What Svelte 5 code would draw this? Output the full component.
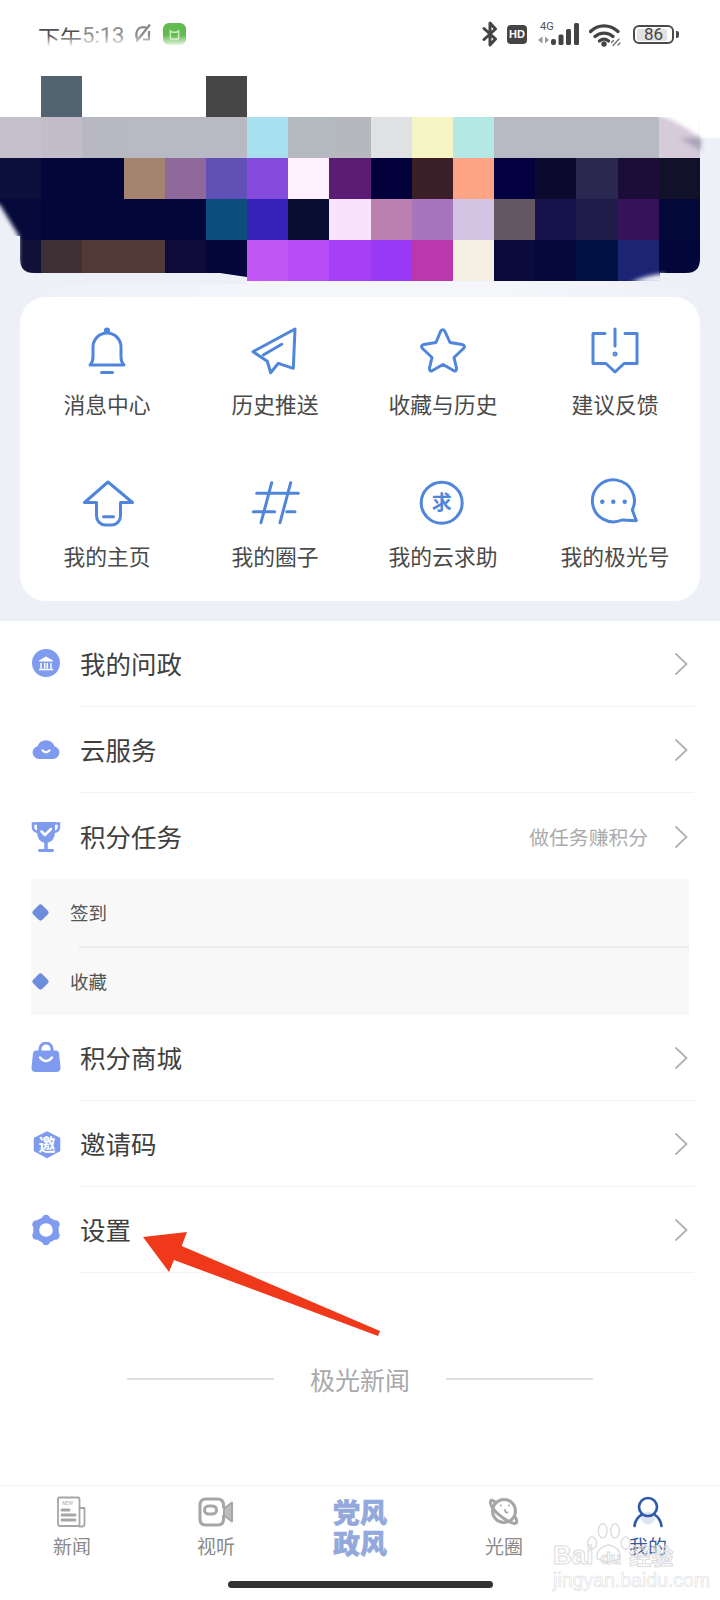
<script>
  const none = 'transparent';
  const mosaic = [
    [none, '#51646f', none, none, none, '#464646', none, none, none, none, none, none, none, none, none, none, none],
    ['#c6bfcc', '#c3bccb', '#b8b8c2', '#b8bac3', '#b7bac4', '#b8b9c2', '#a9e0f0', '#b5b9c0', '#b5b9be', '#dfe1e3', '#f6f5c4', '#b3e8e4', '#b7b9c4', '#b7b9c4', '#b7b9c4', '#b7b9c4', '#d6cbd9'],
    ['#0b0f3a', '#02063a', '#02063a', '#a5846f', '#90699c', '#6150b5', '#844bdc', '#fff0ff', '#5a1c74', '#02003a', '#3c2029', '#ffa385', '#02003f', '#0c0a2c', '#2a2850', '#1b0c38', '#12112a'],
    ['#050a3a', '#02063a', '#02063a', '#02063a', '#02063a', '#0c4d7e', '#3722b7', '#080d33', '#f8e3fd', '#bb7fb0', '#a874bd', '#d4c3e3', '#635864', '#16134c', '#201c4a', '#371258', '#020838'],
    ['#101038', '#3f3036', '#523a38', '#523a38', '#0e0b3a', '#02063a', '#c155f5', '#b84df8', '#a63ff6', '#983af5', '#bb37ac', '#f5efe4', '#0a0a3c', '#04063c', '#021144', '#1c2474', '#02063a']
  ];
</script>

{#snippet bell()}
  <circle cx="24" cy="3.5" r="1.6" />
  <path d="M7 38c2-2 3-4 3-8V20a14 14 0 0 1 28 0v10c0 4 1 6 3 8z" />
  <path d="M18.5 45.5h11" />
{/snippet}

{#snippet plane()}
  <path d="M44 2 2 24.7l14.3 9.6 3.4 11.4 7.6-9.4 15 5z" />
  <path d="M30.7 17.3 12.3 28" />
{/snippet}

{#snippet star()}
  <path d="M21.5 4.5q2.2-3.5 4.5 0l5 11 12 2q4 1 1.500 4l-9.500 9 2.500 10.500q.5 4-3 2.500l-10.500-6-10.500 6q-3.500 1.500-3-2.500l2.500-10.500-9.500-9q-2.500-3 1.500-4l12-2z" />
{/snippet}

{#snippet feedback()}
  <path d="M14 6.500H2v30h13l9 8.500 9-8.500h13v-30H34" />
  <path d="M24 2v17" />
  <circle cx="24" cy="27" r="1" />
{/snippet}

{#snippet house()}
  <path d="M25 3 1.500 23.500h12V37a9 9 0 0 0 9 9h6a9 9 0 0 0 9-9V23.500h12z" />
  <path d="M20.500 37.700h10" />
{/snippet}

{#snippet hash()}
  <path d="M5.700 14.300h41.600M2.300 32.700h21.400M35.700 32.700H44M20.700 3.700 10 43.700M39.700 3.700 29 43.700" />
{/snippet}

{#snippet help()}
  <circle cx="22.700" cy="23.700" r="20.500" />
  <text class="qiu" x="22.700" y="31">求</text>
{/snippet}

{#snippet chat()}
  <path d="M31 41A21 21 0 1 1 41.300 31l4 10.700z" />
  <circle class="solid" cx="11.300" cy="22.700" r="2.200" />
  <circle class="solid" cx="22.300" cy="22.700" r="2.200" />
  <circle class="solid" cx="33.700" cy="22.700" r="2.200" />
{/snippet}

{#snippet tile(label, icon)}
  <div class="tile">
    <svg class="tile-icon" viewBox="0 0 48 48">{@render icon()}</svg>
    <span>{label}</span>
  </div>
{/snippet}

{#snippet bank()}
  <circle cx="16" cy="15" r="14" fill="#7f9bf0" />
  <path d="M16 8.500 9 12.500v1h14v-1z" fill="#fff" />
  <path d="M11 15v5.500M14.700 15v5.500M17.300 15v5.500M21 15v5.500" stroke="#fff" stroke-width="1.500" />
  <path d="M9 21.500h14" stroke="#fff" stroke-width="1.600" />
{/snippet}

{#snippet cloud()}
  <path d="M9 25a6.500 6.500 0 0 1-1.500-12.800 9 9 0 0 1 17 0A6.500 6.500 0 0 1 23 25z" fill="#7f9bf0" />
  <path d="M12.500 16.500q3.500 3.500 7 0" fill="none" stroke="#fff" stroke-width="2.200" stroke-linecap="round" />
{/snippet}

{#snippet trophy()}
  <path d="M7 2h18v10q0 10-9 11-9-1-9-11z" fill="#7f9bf0" />
  <path d="M7 3.500H3V7q0 3.500 4 5M25 3.500h4V7q0 3.500-4 5" fill="none" stroke="#7f9bf0" stroke-width="2.500" />
  <path d="M16 22v7" stroke="#7f9bf0" stroke-width="3.500" />
  <path d="M9.500 30.500h13" stroke="#7f9bf0" stroke-width="3" stroke-linecap="round" />
  <path d="m11.500 11.500 3.500 3.500 6-6" fill="none" stroke="#fff" stroke-width="2.500" stroke-linecap="round" />
{/snippet}

{#snippet bag()}
  <path d="M10 10V7a6 6 0 0 1 12 0v3" fill="none" stroke="#7f9bf0" stroke-width="3" />
  <path d="M6 8.500h20q2.500 0 3 3l1.500 13.500q.5 5-4.500 5H6q-5 0-4.500-5L3 11.500q.5-3 3-3z" fill="#7f9bf0" />
  <path d="M10 15.500q6 7 12 0" fill="none" stroke="#fff" stroke-width="2.500" stroke-linecap="round" />
{/snippet}

{#snippet hex()}
  <path d="M17 4.500 29 10.500v12L17 29 5 22.500v-12z" fill="#7f9bf0" stroke="#7f9bf0" stroke-width="2.500" stroke-linejoin="round" />
  <text class="yao" x="17" y="23">邀</text>
{/snippet}

{#snippet gear()}
  <g fill="#7f9bf0">
    <circle cx="16" cy="16" r="12.800" />
    <circle cx="16" cy="5" r="4.200" />
    <circle cx="16" cy="27" r="4.200" />
    <circle cx="6.500" cy="10.500" r="4.200" />
    <circle cx="25.500" cy="10.500" r="4.200" />
    <circle cx="6.500" cy="21.500" r="4.200" />
    <circle cx="25.500" cy="21.500" r="4.200" />
  </g>
  <circle cx="16" cy="16" r="6.800" fill="#fff" />
{/snippet}

{#snippet row(label, icon, hint = '', last = false)}
  <div class="row">
    <svg class="row-icon" viewBox="0 0 32 32">{@render icon()}</svg>
    <div class="row-body" class:last>
      <span class="row-label">{label}</span>
      {#if hint}<span class="hint">{hint}</span>{/if}
      <svg class="chevron" viewBox="0 0 14 24"><path d="M1.500 1.500 12.500 12 1.500 22.500" /></svg>
    </div>
  </div>
{/snippet}

<div class="page">
  <section class="hero">
    <header class="status">
      <div class="status-left">
        <span class="cn-time">下午</span><span class="time">5:13</span>
        <svg class="alarm" viewBox="0 0 18 20">
          <path d="M4 17C1 13 2 6 7 4.500c2-.5 4-.5 6 .5M15 8v8.500H9" />
          <path d="M2.500 18.500 16 1.500" />
        </svg>
        <div class="app-badge">
          <svg viewBox="0 0 14 14"><path d="M2.500 3l2 1.500h5l2-1.500v7q0 2-2 2h-5q-2 0-2-2z" /></svg>
        </div>
      </div>
      <div class="status-right">
        <svg class="bt" viewBox="0 0 16 26"><path d="M2 7.500 13.500 18 8 24V2l5.500 6L2 18.500" /></svg>
        <span class="hd">HD</span>
        <div class="signal">
          <span class="four-g">4G</span>
          <svg viewBox="0 0 45 24">
            <path d="M6.500 15.500 2 19l4.500 3.500zM9 15.500v7l4-3.500z" fill="#999" />
            <rect x="15" y="18" width="5" height="6" rx="2" />
            <rect x="22.500" y="13.500" width="5" height="10.500" rx="1.500" />
            <rect x="30" y="8" width="5" height="16" rx="1.500" />
            <rect x="38" y="2" width="5" height="22" rx="1.500" />
          </svg>
        </div>
        <svg class="wifi" viewBox="0 0 35 24">
          <path d="M1.500 8.500C9 1 21 1 29 8.500M6 13.500c5-4.500 13-4.500 18 0M10.500 18c3-2.500 6-2.500 9 0" />
          <circle class="wifi-dot" cx="15" cy="21" r="2.700" />
          <path class="wifi-link" d="M24 22.500l6-6.500M22.500 19.500l2-2M29 22l2-2" />
        </svg>
        <div class="battery">
          <div class="battery-cell"><span class="battery-fill"></span><span class="battery-text">86</span></div>
          <span class="battery-tip"></span>
        </div>
      </div>
    </header>

    <div class="mosaic">
      {#each mosaic as cells}
        {#each cells as color}
          <span style="background: {color}"></span>
        {/each}
      {/each}
    </div>
    <div class="band"></div>

    <div class="tiles">
      {@render tile('消息中心', bell)}
      {@render tile('历史推送', plane)}
      {@render tile('收藏与历史', star)}
      {@render tile('建议反馈', feedback)}
      {@render tile('我的主页', house)}
      {@render tile('我的圈子', hash)}
      {@render tile('我的云求助', help)}
      {@render tile('我的极光号', chat)}
    </div>
  </section>

  <section class="list">
    {@render row('我的问政', bank)}
    {@render row('云服务', cloud)}
    {@render row('积分任务', trophy, '做任务赚积分', true)}
    <div class="tasks">
      <div class="task"><i></i><span>签到</span></div>
      <hr />
      <div class="task"><i></i><span>收藏</span></div>
    </div>
    {@render row('积分商城', bag)}
    {@render row('邀请码', hex)}
    {@render row('设置', gear)}
  </section>

  <div class="brand"><b></b><span>极光新闻</span><b></b></div>

  <nav class="nav">
    <div class="tabs">
      <div class="tab">
        <svg viewBox="0 0 32 32">
          <path d="M3 1.500h19q1.500 0 1.500 1.500v27H4q-2 0-2-2V3q0-1.500 1-1.500z" />
          <path d="M23.500 12h5v16q0 2.500-2.500 2.500h-2.500" />
          <text class="new" x="6" y="9">NEW</text>
          <path class="thick" d="M6 14h7M6 19h13M6 24h13" />
        </svg>
        <span>新闻</span>
      </div>
      <div class="tab">
        <svg class="video" viewBox="0 0 36 30">
          <path class="thick" d="M25.500 10V8q0-6-6-6H8Q2 2 2 8v14q0 6 6 6h11.500q6 0 6-6v-3" />
          <rect class="thick" x="6.500" y="9" width="12" height="8" rx="4" />
          <path d="m26 11.500 8-6v19l-8-6z" class="grey-fill" />
        </svg>
        <span>视听</span>
      </div>
      <div class="tab center"><span>党风</span><span>政风</span></div>
      <div class="tab">
        <svg viewBox="0 0 32 32">
          <circle cx="16" cy="15" r="11.500" class="thick" />
          <path class="thick" d="M7 6Q2 2 2.500 7q1 6 10 13t14 7.500q4 0 1-6" />
          <path d="M13 9.500h.1M21 9.500h.1M17 14q.5 3 2.500 2.500" />
        </svg>
        <span>光圈</span>
      </div>
      <div class="tab mine">
        <svg viewBox="0 0 32 32">
          <ellipse cx="16" cy="22" rx="7" ry="6.500" class="blob" />
          <circle cx="16" cy="11" r="9" class="mine-stroke" />
          <path class="mine-stroke" d="M2.500 30Q3.500 22 10 18.500M29.500 30q-1-7.500-7-11.500" />
        </svg>
        <span>我的</span>
      </div>
    </div>
    <div class="home"></div>
  </nav>

  <!-- soft edges of the blurred banner -->
  <svg class="banner-edges" viewBox="0 0 720 300">
    <path class="soft" d="M-6 202 0 205 19 236V290H-6z" fill="#edf0f7" />
    <path d="M-4 236H20V259Q20 273 34 273H220L247 277V284H-4z" fill="#edf0f7" />
    <path class="soft" d="M630 283Q645 275 665 273.500V284z" fill="#edf0f7" />
    <path d="M660 273H686Q700 273 700 259V255H704V284H660z" fill="#edf0f7" />
    <path class="soft" d="M654 114Q674 118 702 139V110H654z" fill="#fff" />
    <path class="soft" d="M680 138 701 138 701 151z" fill="#aaa2b8" />
  </svg>

  <!-- annotation arrow on top of the screenshot -->
  <svg class="arrow" viewBox="0 0 720 1600">
    <path d="M143 1237 187 1232 181.700 1246 380 1331 378 1336 174 1260 169 1272z" fill="#f0391a" />
  </svg>

  <div class="watermark">
    <svg class="paw" viewBox="0 0 60 50">
      <ellipse cx="12" cy="24" rx="5" ry="7" />
      <ellipse cx="24" cy="10" rx="5" ry="8" />
      <ellipse cx="38" cy="10" rx="5" ry="8" />
      <ellipse cx="50" cy="24" rx="5" ry="7" />
      <path d="M18 42q-3-12 13-16 15 4 12 16-12 6-25 0z" />
    </svg>
    <div class="wm-top"><span>Bai</span><span class="wm-du">du</span><span class="wm-cn">经验</span></div>
    <div class="wm-url">jingyan.baidu.com</div>
  </div>
</div>

<style>
  :global(body) {
    margin: 0;
    background: #fff;
  }

  .page {
    position: relative;
    width: 720px;
    height: 1600px;
    display: flex;
    flex-direction: column;
    overflow: hidden;
    background: #fff;
    color: #444;
    font-family: "Noto Sans CJK SC", "Noto Sans", sans-serif;
  }

  .hero {
    height: 621px;
    background: linear-gradient(#fff 0, #fff 138px, #edf0f7 138px);
  }

  .status {
    height: 76px;
    display: flex;
    justify-content: space-between;
    padding: 0 41px 0 38px;
    box-sizing: border-box;
  }

  .status-left {
    position: relative;
    display: flex;
    align-items: flex-start;
    padding-top: 21px;
    height: 30px;
  }

  .status-left::after {
    content: '';
    position: absolute;
    left: -2px;
    right: -2px;
    top: 35px;
    height: 14px;
    background: linear-gradient(rgba(255, 255, 255, 0), #fff 85%);
  }

  .cn-time {
    font-size: 22px;
    line-height: 30px;
    color: #505050;
  }

  .time {
    font-family: Roboto, sans-serif;
    font-size: 22px;
    line-height: 30px;
    color: #8e8e8e;
  }

  .alarm {
    width: 18px;
    height: 20px;
    margin: 2px 0 0 10px;
    fill: none;
    stroke: #8a8a8a;
    stroke-width: 2.200;
  }

  .app-badge {
    width: 23px;
    height: 22px;
    margin: 2px 0 0 11px;
    border-radius: 6px;
    background: #62bb4e;
    display: flex;
    align-items: center;
    justify-content: center;
  }

  .app-badge svg {
    width: 13px;
    height: 13px;
    fill: none;
    stroke: #c9ecc0;
    stroke-width: 1.500;
  }

  .status-right {
    display: flex;
    align-items: flex-start;
    padding-top: 21px;
  }

  .bt {
    width: 16px;
    height: 26px;
    fill: none;
    stroke: #444;
    stroke-width: 3;
    stroke-linejoin: round;
    stroke-linecap: round;
  }

  .hd {
    width: 20px;
    height: 19px;
    margin: 4px 0 0 9px;
    border-radius: 4px;
    background: #444;
    color: #fff;
    font: 700 11px/19px "Liberation Sans", sans-serif;
    text-align: center;
  }

  .signal {
    position: relative;
    width: 45px;
    height: 24px;
    margin-left: 9px;
  }

  .signal svg {
    position: absolute;
    left: 0;
    bottom: 0;
    width: 45px;
    height: 24px;
    fill: #444;
  }

  .four-g {
    position: absolute;
    left: 4px;
    top: 0;
    font: 11px/12px Roboto, sans-serif;
    color: #555;
  }

  .wifi {
    width: 35px;
    height: 24px;
    margin: 2px 0 0 8px;
    fill: none;
    stroke: #444;
    stroke-width: 3.200;
    stroke-linecap: round;
  }

  .wifi-dot {
    fill: #444;
    stroke: none;
  }

  .wifi-link {
    stroke: #777;
    stroke-width: 1.500;
  }

  .battery {
    display: flex;
    align-items: center;
    height: 19px;
    margin: 4px 0 0 9px;
  }

  .battery-cell {
    position: relative;
    width: 41px;
    height: 19px;
    box-sizing: border-box;
    border: 2.500px solid #4a4a4a;
    border-radius: 6px;
  }

  .battery-fill {
    position: absolute;
    left: 2px;
    top: 1.500px;
    bottom: 1.500px;
    width: 80%;
    background: #e2e2e2;
    border-radius: 2px;
  }

  .battery-text {
    position: absolute;
    inset: 0;
    font: 17px/14px Roboto, sans-serif;
    color: #444;
    text-align: center;
  }

  .battery-tip {
    width: 3px;
    height: 7px;
    margin-left: 2px;
    background: #4a4a4a;
    border-radius: 0 2px 2px 0;
  }

  .mosaic {
    width: 700px;
    display: grid;
    grid-template-columns: repeat(17, 1fr);
    grid-auto-rows: 41px;
  }

  .band {
    height: 16px;
    background: linear-gradient(90deg, #edf0f7, #f5f6fa 40%, #f5f6fa 70%, #edf0f7);
  }

  .tiles {
    margin: 0 20px;
    width: 680px;
    height: 304px;
    box-sizing: border-box;
    padding: 30px 0 0 3px;
    background: #fff;
    border-radius: 26px;
    display: grid;
    grid-template-columns: 168px 168px 168px 176px;
    grid-template-rows: 93px 93px;
    row-gap: 59px;
  }

  .tile {
    display: flex;
    flex-direction: column;
    align-items: center;
    gap: 14px;
    font-size: 21.800px;
    line-height: 30px;
    color: #4a4a4a;
    white-space: nowrap;
  }

  .tile-icon {
    width: 48px;
    height: 48px;
    overflow: visible;
    fill: none;
    stroke: #4f86dc;
    stroke-width: 3;
    stroke-linecap: round;
    stroke-linejoin: round;
  }

  .solid {
    fill: #4f86dc;
    stroke: none;
  }

  .qiu {
    fill: #4f86dc;
    stroke: none;
    font-size: 20px;
    font-weight: 700;
    text-anchor: middle;
  }

  .list {
    display: flex;
    flex-direction: column;
  }

  .row {
    height: 86px;
    display: flex;
    align-items: center;
    padding: 0 26px 0 30px;
    gap: 18px;
  }

  .row-icon {
    width: 32px;
    height: 32px;
    flex: none;
  }

  .yao {
    fill: #fff;
    font-size: 17px;
    font-weight: 700;
    text-anchor: middle;
  }

  .row-body {
    flex: 1;
    height: 86px;
    box-sizing: border-box;
    border-bottom: 1.500px solid #f3f3f3;
    display: flex;
    align-items: center;
    padding-top: 1px;
  }

  .row-body.last {
    border-bottom: 0;
  }

  .row-label {
    flex: 1;
    margin-bottom: 3px;
    font-size: 25.500px;
    color: #3f3f3f;
  }

  .hint {
    font-size: 19.800px;
    color: #ababab;
    margin-right: 26px;
  }

  .chevron {
    width: 14px;
    height: 24px;
    margin-right: 6px;
    fill: none;
    stroke: #b2b2b2;
    stroke-width: 1.800;
  }

  .tasks {
    margin: 0 31px;
    height: 136px;
    background: #f8f8f8;
  }

  .task {
    height: 67px;
    display: flex;
    align-items: center;
    gap: 23px;
    padding-left: 3px;
    font-size: 18.500px;
    color: #555;
  }

  .task span {
    margin-bottom: 2px;
  }

  .task i {
    width: 13px;
    height: 13px;
    border-radius: 3px;
    background: #6b8ddb;
    transform: rotate(45deg);
  }

  .tasks hr {
    margin: 0 0 0 48px;
    height: 2px;
    border: 0;
    background: #ebebeb;
  }

  .brand {
    flex: 1;
    display: flex;
    align-items: center;
    gap: 36px;
    padding: 0 127px;
    font-size: 25px;
    color: #a9a9a9;
    white-space: nowrap;
  }

  .brand b {
    flex: 1;
    height: 1.500px;
    background: #e0e0e0;
  }

  .nav {
    border-top: 1.500px solid #f4f4f4;
    box-sizing: border-box;
    height: 115px;
  }

  .tabs {
    display: grid;
    grid-template-columns: repeat(5, 144px);
    padding-top: 10px;
  }

  .tab {
    display: flex;
    flex-direction: column;
    align-items: center;
    gap: 5px;
    font-size: 19px;
    line-height: 26px;
    color: #8a8a8a;
  }

  .tab svg {
    width: 32px;
    height: 32px;
    fill: none;
    stroke: #a6a6a6;
    stroke-width: 1.800;
    stroke-linecap: round;
    stroke-linejoin: round;
  }

  .tab svg.video {
    width: 36px;
  }

  .tab .thick {
    stroke-width: 3;
  }

  .tab .new {
    fill: #aaa;
    stroke: none;
    font: 5px Roboto, sans-serif;
  }

  .tab .grey-fill {
    fill: #bdbdbd;
    stroke: #a6a6a6;
    stroke-width: 2;
  }

  .tab.center {
    gap: 0;
    font-size: 27px;
    line-height: 31px;
    font-weight: 900;
    color: #93a9dc;
    -webkit-text-stroke: 0.500px #93a9dc;
  }

  .tab.mine {
    color: #3a5a9a;
  }

  .tab .mine-stroke {
    stroke: #2f5aa8;
    stroke-width: 2.700;
  }

  .tab .blob {
    fill: #dfe4f2;
    stroke: none;
  }

  .home {
    width: 265px;
    height: 7px;
    margin: 22px auto 0;
    border-radius: 4px;
    background: #333;
  }

  .banner-edges {
    position: absolute;
    left: 0;
    top: 0;
    width: 720px;
    height: 300px;
    pointer-events: none;
  }

  .soft {
    filter: blur(2px);
  }

  .arrow {
    position: absolute;
    left: 0;
    top: 0;
    width: 720px;
    height: 1600px;
    pointer-events: none;
  }

  .watermark {
    position: absolute;
    left: 553px;
    top: 1522px;
    width: 130px;
    color: transparent;
    -webkit-text-stroke: 1px #dcdcdc;
    pointer-events: none;
  }

  .paw {
    position: absolute;
    left: 28px;
    top: 0;
    width: 54px;
    height: 44px;
    fill: none;
    stroke: #dcdcdc;
    stroke-width: 1.500;
  }

  .wm-top {
    position: relative;
    display: flex;
    align-items: baseline;
    margin-top: 20px;
    font: 700 26px/24px "Liberation Sans", sans-serif;
  }

  .wm-du {
    margin-left: 7px;
    font-size: 17px;
  }

  .wm-cn {
    margin-left: 8px;
    font-size: 22px;
    font-family: "Noto Sans CJK SC", sans-serif;
  }

  .wm-url {
    font: 19.500px/20px "Liberation Sans", sans-serif;
    -webkit-text-stroke: 0.600px #e0e0e0;
    margin-top: -1px;
    white-space: nowrap;
  }
</style>
